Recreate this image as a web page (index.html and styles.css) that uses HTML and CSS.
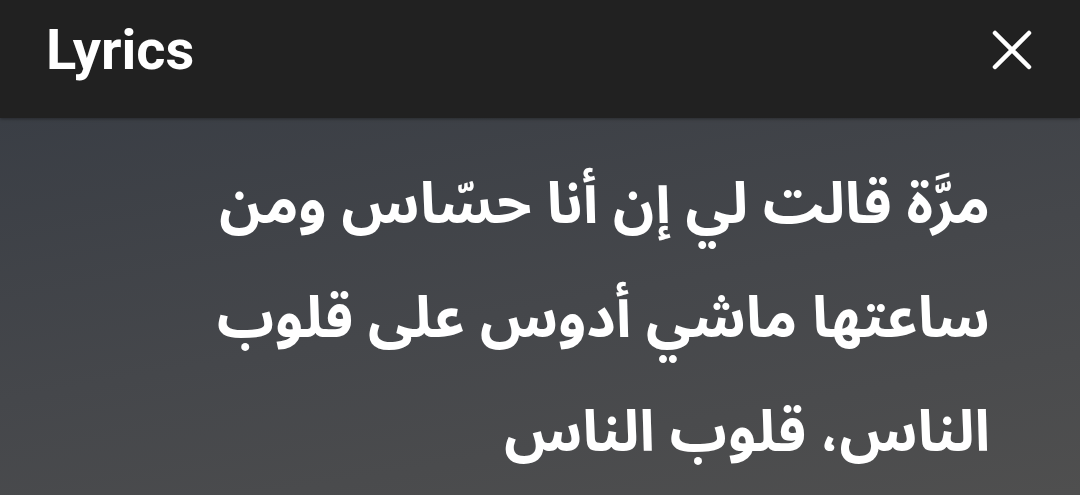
FILE: index.html
```html
<!DOCTYPE html>
<html lang="ar">
<head>
<meta charset="utf-8">
<link rel="stylesheet" href="styles.css">
</head>
<body>
<div class="app">
  <header class="bar">
    <h1 class="title">Lyrics</h1>
    <button class="close" aria-label="Close">
      <svg viewBox="0 0 40 40" width="40" height="40">
        <path d="M3 3 L37 37 M37 3 L3 37" stroke="#ffffff" stroke-width="4.5" stroke-linecap="round" fill="none"/>
      </svg>
    </button>
  </header>
  <main class="lyrics" dir="rtl">
    <p class="line">مرَّة قالت لي إن أنا حسّاس ومن</p>
    <p class="line">ساعتها ماشي أدوس على قلوب</p>
    <p class="line">الناس، قلوب الناس</p>
  </main>
</div>
</body>
</html>
```
FILE: styles.css
```css
html, body {
  margin: 0;
  padding: 0;
  width: 1080px;
  height: 495px;
  overflow: hidden;
  background: #212121;
}
.app {
  display: flex;
  flex-direction: column;
  height: 495px;
}
.bar {
  height: 118px;
  flex: 0 0 118px;
  background: #212121;
  display: flex;
  align-items: center;
  justify-content: space-between;
  padding: 0 48px 0 46px;
  box-sizing: border-box;
  box-shadow: 0 1px 3px rgba(0,0,0,0.35);
  position: relative;
  z-index: 1;
}
.title {
  margin: 0;
  font-family: Roboto, "Liberation Sans", sans-serif;
  font-weight: 700;
  font-size: 56px;
  color: #ffffff;
  line-height: 1;
  margin-top: -18px;
}
.close {
  background: none;
  border: 0;
  padding: 0;
  width: 40px;
  height: 40px;
  display: flex;
  margin-top: -18px;
}
.lyrics {
  flex: 1;
  background: linear-gradient(170deg, #3a3e45 0%, #45474b 50%, #4f4f4f 100%);
  padding: 30px 90px 0 0;
  box-sizing: border-box;
}
.line {
  margin: 0;
  font-family: "Noto Sans Arabic", "DejaVu Sans", sans-serif;
  font-weight: 700;
  font-size: 57px;
  line-height: 114px;
  color: #ffffff;
  text-align: right;
}
```
